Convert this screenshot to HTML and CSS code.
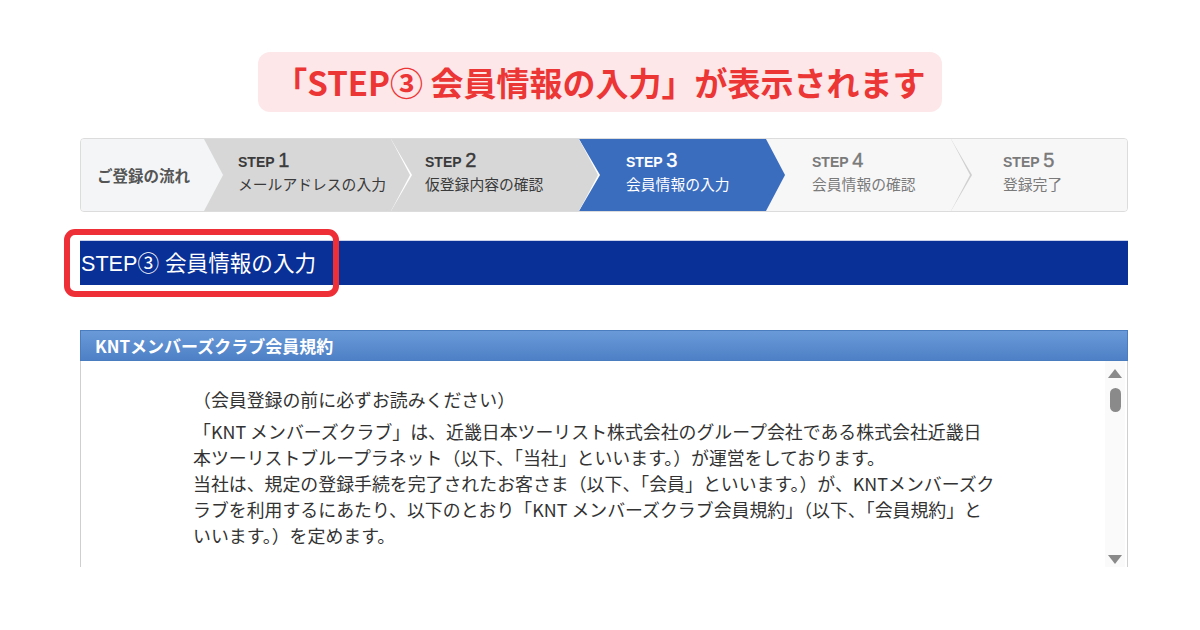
FILE: index.html
```html
<!DOCTYPE html>
<html lang="ja">
<head>
    <meta charset="UTF-8">
    <title>STEP3 会員情報の入力</title>
    <link rel="stylesheet" href="styles.css">
</head>
<body>
    <div class="banner">「STEP③ 会員情報の入力」が表示されます</div>

    <div class="page">
        <!-- ステップ表示 -->
        <ol class="steps">
            <li class="step step-flow"><span class="flow-label">ご登録の流れ</span></li>
            <li class="step step-done">
                <span class="step-no">STEP <b>1</b></span>
                <span class="step-name">メールアドレスの入力</span>
            </li>
            <li class="step step-done">
                <span class="step-no">STEP <b>2</b></span>
                <span class="step-name">仮登録内容の確認</span>
            </li>
            <li class="step step-current">
                <span class="step-no">STEP <b>3</b></span>
                <span class="step-name">会員情報の入力</span>
            </li>
            <li class="step step-next">
                <span class="step-no">STEP <b>4</b></span>
                <span class="step-name">会員情報の確認</span>
            </li>
            <li class="step step-last">
                <span class="step-no">STEP <b>5</b></span>
                <span class="step-name">登録完了</span>
            </li>
        </ol>

        <!-- 見出し -->
        <div class="heading-wrap">
            <h2 class="heading">STEP③ 会員情報の入力</h2>
            <span class="highlight"></span>
        </div>

        <!-- 規約 -->
        <div class="panel">
            <div class="panel-head">KNTメンバーズクラブ会員規約</div>
            <div class="panel-body">
                <div class="terms">
                    <p class="terms-lead">（会員登録の前に必ずお読みください）</p>
                    <p>「KNT メンバーズクラブ」は、近畿日本ツーリスト株式会社のグループ会社である株式会社近畿日<br>本ツーリストブループラネット（以下、「当社」といいます。）が運営をしております。<br>当社は、規定の登録手続を完了されたお客さま（以下、「会員」といいます。）が、KNTメンバーズク<br>ラブを利用するにあたり、以下のとおり「KNT メンバーズクラブ会員規約」（以下、「会員規約」と<br>いいます。）を定めます。</p>
                </div>
                <div class="scrollbar">
                    <span class="arrow-up"></span>
                    <span class="thumb"></span>
                    <span class="arrow-down"></span>
                </div>
            </div>
        </div>
    </div>
</body>
</html>
```

FILE: styles.css
```css
* {
    margin: 0;
    padding: 0;
    box-sizing: border-box;
}

body {
    font-family: "Noto Sans CJK JP", "Liberation Sans", sans-serif;
    background: #fff;
    color: #333;
}

.banner {
    width: 684px;
    height: 60px;
    margin: 52px auto 0;
    background: #fde7e9;
    border-radius: 12px;
    color: #ec3535;
    font-size: 33px;
    font-weight: 700;
    line-height: 60px;
    text-align: center;
}

.page {
    width: 1048px;
    margin-left: 80px;
}

/* ステップ */
.steps {
    list-style: none;
    display: flex;
    height: 74px;
    margin-top: 26px;
    border: 1px solid #dcdcdc;
    border-radius: 4px;
    overflow: hidden;
    background: #f7f7f8;
}

.step {
    position: relative;
    display: flex;
    flex-direction: column;
    justify-content: center;
    padding-bottom: 4px;
    background: var(--bg);
    --bg: #f7f7f8;
    --line: transparent;
}

.step::before,
.step::after {
    content: "";
    position: absolute;
    top: 0;
    height: 100%;
    clip-path: polygon(0 0, 100% 50%, 0 100%);
}

.step::before {
    right: -21px;
    width: 21px;
    background: var(--line);
    z-index: 2;
}

.step::after {
    right: -19px;
    width: 19px;
    background: var(--bg);
    z-index: 3;
}

.step-flow {
    width: 123px;
    --bg: #f4f5f7;
    padding-left: 16px;
    padding-bottom: 0;
}

.flow-label {
    font-size: 15.5px;
    font-weight: 700;
    color: #555;
}

.step-done {
    width: 187px;
    --bg: #d7d7d7;
    --line: #fff;
    color: #3a3a3a;
    padding-left: 34px;
}

.step-done + .step-done {
    width: 188px;
}

.step-current {
    width: 187px;
    --bg: #3b6dbf;
    color: #fff;
    padding-left: 47px;
}

.step-next {
    width: 185px;
    --line: #cfcfcf;
    color: #7a7a7a;
    padding-left: 46px;
}

.step-last {
    flex: 1;
    color: #7a7a7a;
    padding-left: 52px;
}

.step-no {
    font-family: "Liberation Sans", sans-serif;
    font-size: 14px;
    font-weight: 700;
    line-height: 20px;
}

.step-no b {
    font-size: 20px;
    font-weight: 400;
    -webkit-text-stroke: 0.4px currentColor;
}

.step-name {
    font-size: 14.8px;
    line-height: 24px;
    white-space: nowrap;
}

/* 見出し */
.heading-wrap {
    position: relative;
    margin-top: 28px;
}

.heading {
    height: 45px;
    background: #083096;
    color: #fff;
    font-family: "Liberation Sans", "Noto Sans CJK JP", sans-serif;
    font-size: 21.6px;
    font-weight: 400;
    line-height: 45px;
    padding-left: 1px;
    border-top: 1px solid #c9d2ea;
}

.highlight {
    position: absolute;
    left: -16px;
    top: -11px;
    width: 275px;
    height: 68px;
    border: 6px solid #ee2f37;
    border-radius: 11px;
}

/* 規約パネル */
.panel {
    margin-top: 45px;
}

.panel-head {
    height: 31px;
    padding-left: 14px;
    background: linear-gradient(#6a9ad8, #4d80c6);
    color: #fff;
    font-size: 17px;
    font-weight: 700;
    line-height: 30px;
    border: 1px solid #4a7cc0;
}

.panel-body {
    display: flex;
    height: 206px;
    border-left: 1px solid #cfcfcf;
    border-right: 1px solid #cfcfcf;
}

.terms {
    flex: 1;
    padding: 25px 0 0 112px;
    font-size: 17.9px;
    line-height: 26px;
    color: #333;
    white-space: nowrap;
}

.terms-lead {
    margin-bottom: 6px;
}

.scrollbar {
    width: 20px;
    background: #fafafa;
    display: flex;
    flex-direction: column;
    align-items: center;
    padding-top: 8px;
    margin-right: 2px;
}

.arrow-up,
.arrow-down {
    width: 0;
    height: 0;
    border-left: 7px solid transparent;
    border-right: 7px solid transparent;
}

.arrow-up {
    border-bottom: 9px solid #8a8a8a;
}

.arrow-down {
    border-top: 9px solid #8a8a8a;
    margin-top: auto;
    margin-bottom: 3px;
}

.thumb {
    width: 11px;
    height: 24px;
    margin-top: 10px;
    border-radius: 6px;
    background: #8a8a8a;
}
```
